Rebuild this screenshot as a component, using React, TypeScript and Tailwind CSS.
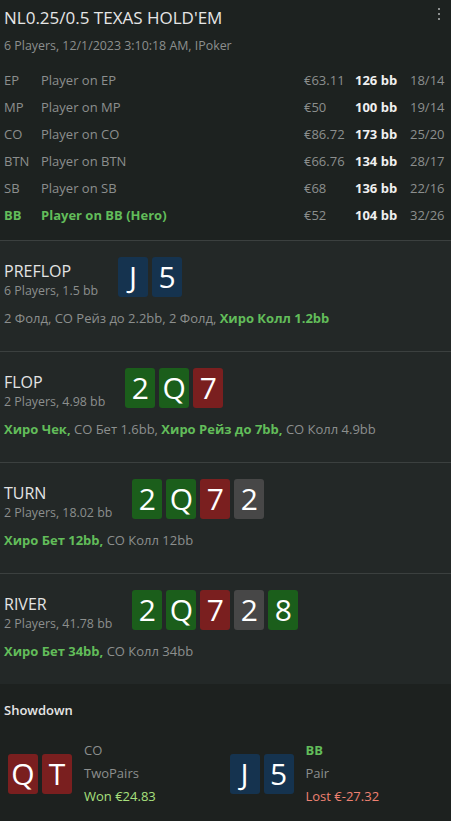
import React from "react";

type C = { r: string; c: "b" | "g" | "r" | "k" };

const cardColor: Record<string, string> = {
  b: "bg-[#15334f]",
  g: "bg-[#1b5e1b]",
  r: "bg-[#7a1f1f]",
  k: "bg-[#474747]",
};

function Card({ r, c }: C) {
  return (
    <div
      className={`w-[30px] h-[40px] rounded-[3px] flex items-center justify-center text-white text-[30px] leading-none ${cardColor[c]}`}
    >
      {r}
    </div>
  );
}

const players = [
  { pos: "EP", name: "Player on EP", eur: "€63.11", bb: "126 bb", st: "18/14" },
  { pos: "MP", name: "Player on MP", eur: "€50", bb: "100 bb", st: "19/14" },
  { pos: "CO", name: "Player on CO", eur: "€86.72", bb: "173 bb", st: "25/20" },
  { pos: "BTN", name: "Player on BTN", eur: "€66.76", bb: "134 bb", st: "28/17" },
  { pos: "SB", name: "Player on SB", eur: "€68", bb: "136 bb", st: "22/16" },
  { pos: "BB", name: "Player on BB (Hero)", eur: "€52", bb: "104 bb", st: "32/26", hero: true },
];

type Act = { t: string; h?: boolean };

function Street({
  title,
  sub,
  cards,
  acts,
}: {
  title: string;
  sub: string;
  cards: C[];
  acts: Act[];
}) {
  return (
    <div className="border-t border-[#3b403f] bg-[#232827] px-1 pt-4 pb-[23px]">
      <div className="flex items-start gap-5">
        <div className="mt-1">
          <div className="text-[16px] leading-5 text-[#e4e4e4]">{title}</div>
          <div className="text-[12.4px] leading-5 text-[#8c8f8e]">{sub}</div>
        </div>
        <div className="flex gap-1">
          {cards.map((c, i) => (
            <Card key={i} {...c} />
          ))}
        </div>
      </div>
      <div className="mt-[7px] text-[13px] leading-5 text-[#8c8f8e]">
        {acts.map((a, i) => (
          <span key={i} className={a.h ? "font-bold text-[#62bd5a]" : ""}>
            {a.t}
            {i < acts.length - 1 ? ", " : ""}
          </span>
        ))}
      </div>
    </div>
  );
}

export default function App() {
  return (
    <div
      className="w-[451px] min-h-[821px] bg-[#1d211f] text-[#e4e4e4]"
      style={{ fontFamily: '"Open Sans", "Noto Sans", sans-serif' }}
    >
      <div className="relative bg-[#1d2220] px-1 pt-[6px] pb-[11px]">
        <div className="text-[17px] leading-6 text-[#e6e6e6]">NL0.25/0.5 TEXAS HOLD'EM</div>
        <div className="mt-1.5 text-[12.4px] leading-5 text-[#8c8f8e]">
          6 Players, 12/1/2023 3:10:18 AM, IPoker
        </div>
        <div className="absolute right-[11px] top-[8px] flex flex-col gap-[3px]">
          <div className="w-[2px] h-[2px] bg-[#8c8f8e]" />
          <div className="w-[2px] h-[2px] bg-[#8c8f8e]" />
          <div className="w-[2px] h-[2px] bg-[#8c8f8e]" />
        </div>
        <div className="mt-[11px] text-[13px]">
          {players.map((p) => (
            <div key={p.pos} className="flex h-[27px] items-center">
              <div className={`w-[37px] ${p.hero ? "font-bold text-[#62bd5a]" : "text-[#8c8f8e]"}`}>{p.pos}</div>
              <div className={`flex-1 ${p.hero ? "font-bold text-[#62bd5a]" : "text-[#8c8f8e]"}`}>{p.name}</div>
              <div className="w-[51px] text-[#8c8f8e]">{p.eur}</div>
              <div className="w-[55px] font-bold text-[#f0f0f0]">{p.bb}</div>
              <div className="w-[37px] text-[#8c8f8e]">{p.st}</div>
            </div>
          ))}
        </div>
      </div>

      <Street
        title="PREFLOP"
        sub="6 Players, 1.5 bb"
        cards={[{ r: "J", c: "b" }, { r: "5", c: "b" }]}
        acts={[
          { t: "2 Фолд" },
          { t: "CO Рейз до 2.2bb" },
          { t: "2 Фолд" },
          { t: "Хиро Колл 1.2bb", h: true },
        ]}
      />
      <Street
        title="FLOP"
        sub="2 Players, 4.98 bb"
        cards={[{ r: "2", c: "g" }, { r: "Q", c: "g" }, { r: "7", c: "r" }]}
        acts={[
          { t: "Хиро Чек", h: true },
          { t: "CO Бет 1.6bb" },
          { t: "Хиро Рейз до 7bb", h: true },
          { t: "CO Колл 4.9bb" },
        ]}
      />
      <Street
        title="TURN"
        sub="2 Players, 18.02 bb"
        cards={[{ r: "2", c: "g" }, { r: "Q", c: "g" }, { r: "7", c: "r" }, { r: "2", c: "k" }]}
        acts={[{ t: "Хиро Бет 12bb", h: true }, { t: "CO Колл 12bb" }]}
      />
      <Street
        title="RIVER"
        sub="2 Players, 41.78 bb"
        cards={[
          { r: "2", c: "g" },
          { r: "Q", c: "g" },
          { r: "7", c: "r" },
          { r: "2", c: "k" },
          { r: "8", c: "g" },
        ]}
        acts={[{ t: "Хиро Бет 34bb", h: true }, { t: "CO Колл 34bb" }]}
      />

      <div className="bg-[#1d211f] px-1 pt-[17px] pb-3">
        <div className="text-[13px] leading-[18px] font-semibold text-[#e6e6e6]">Showdown</div>
        <div className="mt-5 grid grid-cols-2">
          <div className="flex items-center gap-3 pl-1">
            <div className="flex gap-1">
              <Card r="Q" c="r" />
              <Card r="T" c="r" />
            </div>
            <div className="text-[13px] leading-[23px]">
              <div className="text-[#8c8f8e]">CO</div>
              <div className="text-[#8c8f8e]">TwoPairs</div>
              <div className="text-[#a8e07e]">Won €24.83</div>
            </div>
          </div>
          <div className="flex items-center gap-3 pl-1">
            <div className="flex gap-1">
              <Card r="J" c="b" />
              <Card r="5" c="b" />
            </div>
            <div className="text-[13px] leading-[23px]">
              <div className="font-bold text-[#62bd5a]">BB</div>
              <div className="text-[#8c8f8e]">Pair</div>
              <div className="text-[#ef8272]">Lost €-27.32</div>
            </div>
          </div>
        </div>
      </div>
    </div>
  );
}
